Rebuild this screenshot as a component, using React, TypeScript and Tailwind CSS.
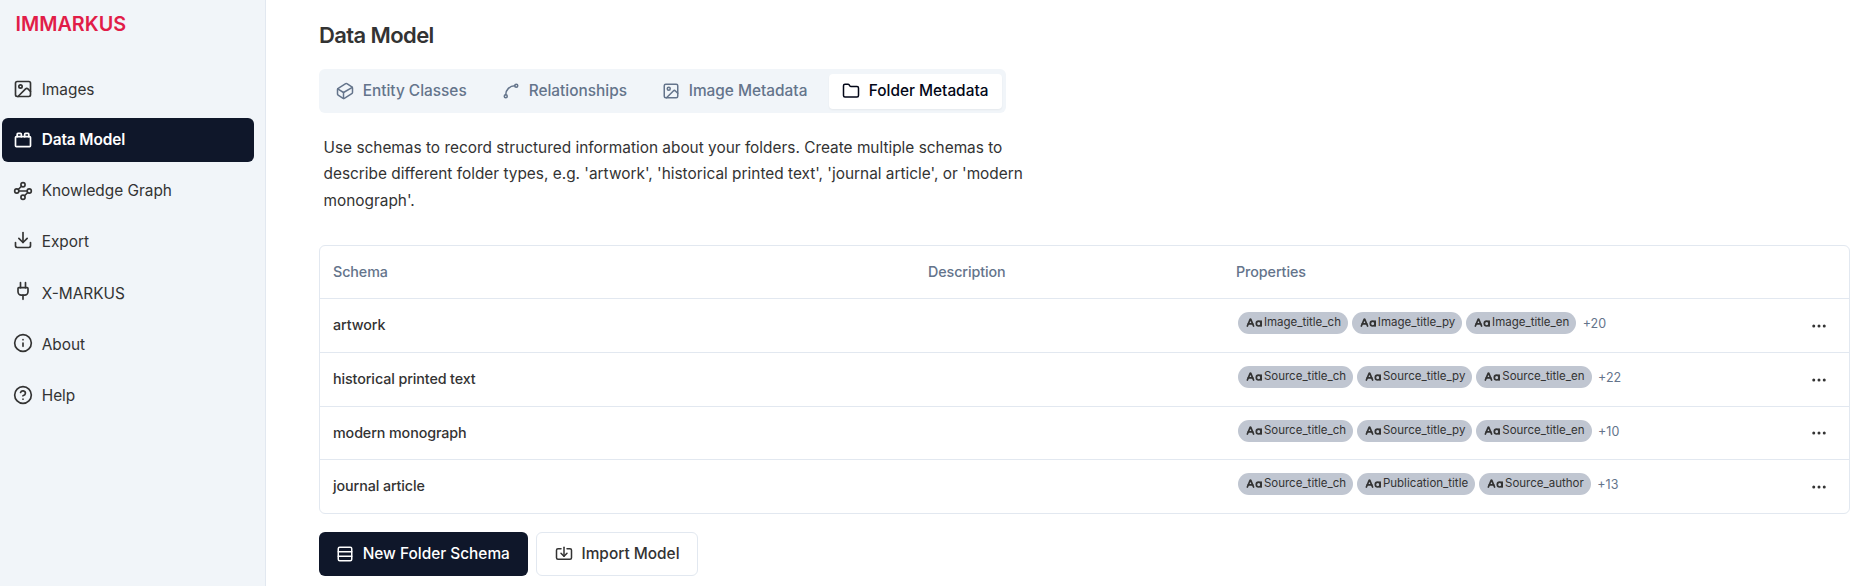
import React from 'react';
import { Image, ToyBrick, Waypoints, Download, Plug, Info, CircleHelp, Cuboid, Spline, Folder, Rows3, Import, CaseSensitive, Ellipsis } from 'lucide-react';

const NAV = [
  { label: 'Images', icon: Image, y: 'mt-0', t: 'ml-[8.7px] pt-[2px]' },
  { label: 'Data Model', icon: ToyBrick, y: 'mt-0', t: 'ml-[8.7px] tracking-[-0.1px]', active: true },
  { label: 'Knowledge Graph', icon: Waypoints, y: 'mt-0', t: 'ml-[8.7px]' },
  { label: 'Export', icon: Download, y: 'mt-[-4px]', t: 'ml-[8.7px]' },
  { label: 'X-MARKUS', icon: Plug, y: 'mt-[-4px]', t: 'ml-[8.7px] pt-[2px]' },
  { label: 'About', icon: Info, y: 'mt-[-2px]', t: 'ml-[8.7px] pt-[2px]' },
  { label: 'Help', icon: CircleHelp, y: 'mt-0', t: 'ml-[8.7px] pt-[2px]' },
];

const TABS = [
  { label: 'Entity Classes', icon: Cuboid, w: 'w-[166px]' },
  { label: 'Relationships', icon: Spline, w: 'w-[160px]' },
  { label: 'Image Metadata', icon: Image, w: 'w-[180px]' },
  { label: 'Folder Metadata', icon: Folder, w: 'w-[173px]', active: true },
];

const ROWS = [
  { name: 'artwork', props: ['Image_title_ch', 'Image_title_py', 'Image_title_en'], more: 20, h: 'h-[54px]' },
  { name: 'historical printed text', props: ['Source_title_ch', 'Source_title_py', 'Source_title_en'], more: 22, h: 'h-[54px]' },
  { name: 'modern monograph', props: ['Source_title_ch', 'Source_title_py', 'Source_title_en'], more: 10, h: 'h-[53px]' },
  { name: 'journal article', props: ['Source_title_ch', 'Publication_title', 'Source_author'], more: 13, h: 'h-[54px]' },
];

function Sidebar() {
  return (
    <aside className="w-[266px] shrink-0 border-r border-[#e2e8f0] bg-[#f1f5f9] pl-0.5">
      <h1 className="pl-[13.5px] pt-[9px] text-[19.8px] font-semibold leading-[30px] text-[#e11d48]">IMMARKUS</h1>
      <nav className="mt-[28px] flex w-[252px] flex-col gap-[7px]">
        {NAV.map(({ label, icon: Icon, y, t, active }) => (
          <a
            key={label}
            className={
              active
                ? 'flex h-11 items-center rounded-md bg-[#0f172a] pl-[11px] text-[15.4px] font-semibold leading-6 text-white'
                : 'flex h-11 items-center rounded-md pl-[11px] text-[15.4px] leading-6'
            }
          >
            <Icon size={20} strokeWidth={2} className={y} />
            <span className={t}>{label}</span>
          </a>
        ))}
      </nav>
    </aside>
  );
}

function Tabs() {
  return (
    <div className="mt-[19px] flex h-11 w-[687px] items-center rounded-md bg-[#f1f5f9] p-1 text-[15.4px] font-medium text-[#64748b]">
      {TABS.map(({ label, icon: Icon, w, active }) => (
        <div
          key={label}
          className={
            (active
              ? 'flex h-[35px] items-center rounded bg-white pl-[13px] text-[#020617] shadow-[0_1px_2px_0_rgba(0,0,0,0.05)] '
              : 'flex h-[35px] items-center pl-[13px] ') + w
          }
        >
          <Icon size={18} strokeWidth={2} />
          <span className="ml-[8.7px]">{label}</span>
        </div>
      ))}
    </div>
  );
}

function SchemaTable() {
  return (
    <div className="mt-[31px] w-[1531px] rounded-md border border-[#e2e8f0] text-[14.3px] leading-[21px]">
      <div className="flex h-[52px] items-center pb-px pl-[13px] font-medium tracking-[-0.08px] text-[#64748b]">
        <span className="w-[595px]">Schema</span>
        <span className="w-[308px]">Description</span>
        <span>Properties</span>
      </div>
      {ROWS.map((row) => (
        <div key={row.name} className={'flex items-center border-t border-[#e2e8f0] pl-[13px] ' + row.h}>
          <span className="w-[903px] pb-[2px] font-medium tracking-[-0.1px]">{row.name}</span>
          <div className="flex items-center gap-1 self-start pl-[2px] pt-[13px]">
            {row.props.map((p) => (
              <span key={p} className="flex h-[22px] items-center rounded-full bg-[#c0c6d1] pl-[7.6px] pr-[7px] text-[11.5px]">
                <CaseSensitive size={16.5} strokeWidth={2.5} />
                <span className="ml-[1.8px] pb-px">{p}</span>
              </span>
            ))}
            <span className="ml-[2.5px] mt-px text-[12.5px] leading-[18px] text-[#64748b]">+{row.more}</span>
          </div>
          <Ellipsis size={18} className="ml-auto mr-[21px]" />
        </div>
      ))}
    </div>
  );
}

export default function App() {
  return (
    <div className="flex h-[586px] w-[1875px] overflow-hidden bg-white font-['Inter',sans-serif] text-[#333333]">
      <Sidebar />
      <main className="pl-[53px]">
        <h2 className="pt-[20px] text-[22px] font-semibold leading-[30px] tracking-[-0.6px]">Data Model</h2>
        <Tabs />
        <p className="mt-[22px] w-[720px] pl-[4.5px] text-[15.4px] leading-[26.4px]">
          Use schemas to record structured information about your folders. Create multiple schemas to describe different folder types, e.g. 'artwork', 'historical printed text', 'journal article', or 'modern monograph'.
        </p>
        <SchemaTable />
        <div className="mt-[18px] flex gap-2 text-[15.4px] font-medium">
          <button className="flex h-11 w-[209px] items-center rounded-md bg-[#0f172a] pl-[17px] text-white">
            <Rows3 size={18} strokeWidth={2} />
            <span className="ml-[8.7px] pb-px">New Folder Schema</span>
          </button>
          <button className="flex h-11 w-[162px] items-center rounded-md border border-[#e2e8f0] pl-[18px]">
            <Import size={18} strokeWidth={2} />
            <span className="ml-[8.5px] pb-px">Import Model</span>
          </button>
        </div>
      </main>
    </div>
  );
}
